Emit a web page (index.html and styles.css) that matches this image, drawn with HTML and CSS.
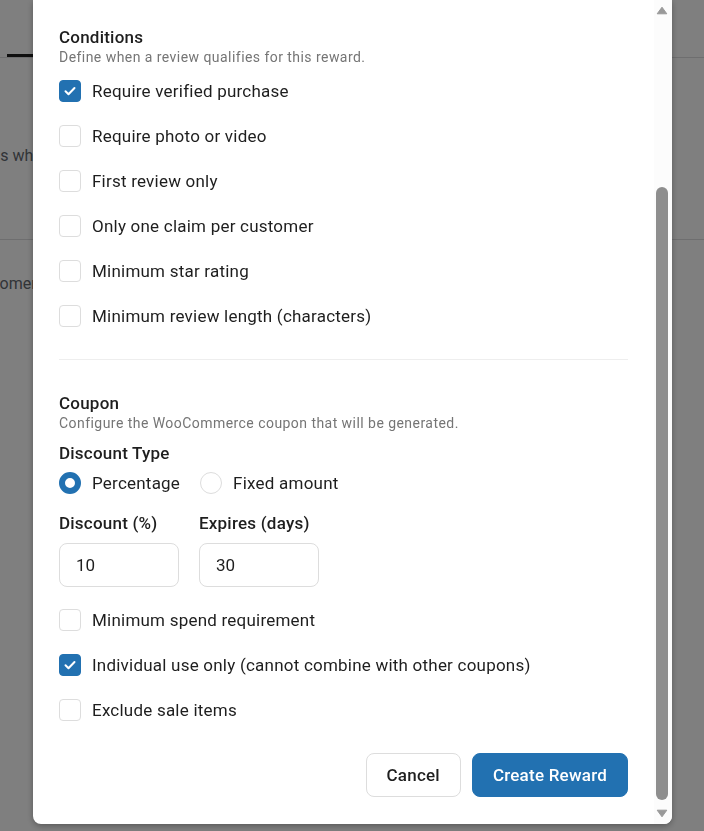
FILE: index.html
```html
<!DOCTYPE html>
<html lang="en">
<head>
  <meta charset="UTF-8">
  <meta name="viewport" content="width=device-width, initial-scale=1.0">
  <title>Review Rewards</title>
  <link rel="stylesheet" href="styles.css">
</head>
<body>
  <!-- Page behind the modal -->
  <div class="page">
    <header class="page-header">
      <nav class="tabs">
        <a class="tab active">Rewards</a>
        <a class="tab">Settings</a>
      </nav>
    </header>
    <section class="page-intro">
      <p class="page-desc">Rewards when a customer leaves a review for a product.</p>
    </section>
    <section class="page-row">
      <p class="page-text">customer reviews</p>
    </section>
  </div>

  <!-- Create Reward modal -->
  <div class="overlay">
    <div class="modal">
      <div class="modal-scroll">
        <div class="modal-body">
          <h2 class="modal-title">Create Reward</h2>

          <div class="field name-field">
            <label class="field-label">Reward name</label>
            <input class="text-input" type="text" value="Review reward">
          </div>

          <section class="group">
            <h3 class="group-title">Conditions</h3>
            <p class="group-desc">Define when a review qualifies for this reward.</p>
            <div class="check-list">
              <label class="check"><span class="box checked"><svg viewBox="0 0 22 22" width="22" height="22"><path d="M6.5 11.3l3 3 6-6.3" fill="none" stroke="#fff" stroke-width="2" stroke-linecap="round" stroke-linejoin="round"/></svg></span>Require verified purchase</label>
              <label class="check"><span class="box"></span>Require photo or video</label>
              <label class="check"><span class="box"></span>First review only</label>
              <label class="check"><span class="box"></span>Only one claim per customer</label>
              <label class="check"><span class="box"></span>Minimum star rating</label>
              <label class="check"><span class="box"></span>Minimum review length (characters)</label>
            </div>
          </section>

          <hr class="divider">

          <section class="group coupon">
            <h3 class="group-title">Coupon</h3>
            <p class="group-desc">Configure the WooCommerce coupon that will be generated.</p>
            <div class="field-title type-title">Discount Type</div>
            <div class="radio-row">
              <label class="radio"><span class="dot checked"></span>Percentage</label>
              <label class="radio"><span class="dot"></span>Fixed amount</label>
            </div>
            <div class="field-grid">
              <div class="field num-field">
                <label class="field-title">Discount (%)</label>
                <input class="num-input" type="text" value="10">
              </div>
              <div class="field num-field">
                <label class="field-title">Expires (days)</label>
                <input class="num-input" type="text" value="30">
              </div>
            </div>
            <div class="check-list coupon-checks">
              <label class="check"><span class="box"></span>Minimum spend requirement</label>
              <label class="check"><span class="box checked"><svg viewBox="0 0 22 22" width="22" height="22"><path d="M6.5 11.3l3 3 6-6.3" fill="none" stroke="#fff" stroke-width="2" stroke-linecap="round" stroke-linejoin="round"/></svg></span>Individual use only (cannot combine with other coupons)</label>
              <label class="check"><span class="box"></span>Exclude sale items</label>
            </div>
          </section>

          <div class="actions">
            <button class="btn">Cancel</button>
            <button class="btn primary">Create Reward</button>
          </div>
        </div>
      </div>

      <!-- scrollbar of the modal body -->
      <div class="scrollbar">
        <div class="sb-btn sb-up"><svg width="12" height="9" viewBox="0 0 12 9"><path d="M6 1.2L10.8 7.8H1.2z" fill="#999" stroke="#999" stroke-linejoin="round"/></svg></div>
        <div class="sb-track"><div class="sb-thumb"></div></div>
        <div class="sb-btn sb-down"><svg width="12" height="9" viewBox="0 0 12 9"><path d="M6 7.8L10.8 1.2H1.2z" fill="#999" stroke="#999" stroke-linejoin="round"/></svg></div>
      </div>
    </div>
  </div>
</body>
</html>
```

FILE: styles.css
```css
body {
  margin: 0;
  font-family: Roboto, "Liberation Sans", Arial, sans-serif;
  background: #fff;
  color: #1e1e1e;
  overflow: hidden;
}

/* Page behind */
.page-header {
  height: 58px;
  border-bottom: 1px solid #dcdcde;
  padding: 0 7px;
  display: flex;
  align-items: flex-end;
  box-sizing: border-box;
}

.tabs {
  display: flex;
}

.tab {
  padding: 0 40px 18px;
  font-size: 14px;
  color: #50575e;
  border-bottom: 3px solid transparent;
}

.tab.active {
  color: #1e1e1e;
  border-bottom-color: #1e1e1e;
}

.page-intro {
  height: 182px;
  padding-top: 88px;
  box-sizing: border-box;
  border-bottom: 1px solid #dcdcde;
}

.page-desc,
.page-text {
  margin: 0;
  font-size: 16px;
  line-height: 20px;
  color: #646970;
  white-space: nowrap;
}

.page-desc {
  margin-left: -53px;
}

.page-row {
  padding-top: 34px;
}

.page-text {
  margin-left: -31px;
}

/* Overlay + modal */
.overlay {
  position: fixed;
  top: 0;
  left: 0;
  right: 0;
  bottom: 0;
  background: rgba(0, 0, 0, 0.5);
  display: flex;
  align-items: flex-end;
  padding: 0 32px 7px 33px;
}

.modal {
  flex: 1;
  height: 824px;
  background: #fff;
  border-radius: 0 0 8px 8px;
  box-shadow: 0 2px 6px rgba(0, 0, 0, 0.3);
  overflow: hidden;
  display: flex;
}

.modal-scroll {
  flex: 1;
  overflow: hidden;
  display: flex;
  flex-direction: column-reverse;
}

.modal-body {
  flex: none;
  padding: 24px 26px 27px;
}

/* Scrollbar */
.scrollbar {
  width: 18px;
  flex: none;
  background: #fcfcfc;
  display: flex;
  flex-direction: column;
}

.sb-btn {
  display: flex;
  align-items: center;
  padding-left: 2px;
}

.sb-up {
  height: 20px;
}

.sb-down {
  height: 22px;
}

.sb-track {
  flex: 1;
  display: flex;
  flex-direction: column;
  justify-content: flex-end;
  padding: 0 4px 2px 2px;
}

.sb-thumb {
  height: 613px;
  background: #8e8e8e;
  border-radius: 6px;
}

/* Hidden top part of the form */
.modal-title {
  margin: 0 0 20px;
  font-size: 20px;
  line-height: 28px;
  font-weight: 500;
}

.field {
  display: flex;
  flex-direction: column;
  gap: 8px;
}

.name-field {
  margin-bottom: 79px;
}

.field-label {
  font-size: 14px;
  line-height: 20px;
  font-weight: 500;
}

.text-input {
  height: 44px;
  box-sizing: border-box;
  border: 1px solid #ddd;
  border-radius: 8px;
  padding: 0 16px;
  font: inherit;
  font-size: 16px;
  color: #1e1e1e;
}

/* Groups */
.group-title {
  margin: 0;
  font-size: 17px;
  line-height: 20px;
  letter-spacing: 0.22px;
  font-weight: 500;
  color: #1e1e1e;
}

.group-desc {
  margin: 1px 0 0;
  font-size: 14px;
  line-height: 18px;
  letter-spacing: 0.45px;
  color: #757575;
}

.check-list {
  margin-top: 14px;
  display: flex;
  flex-direction: column;
  gap: 23px;
}

.check,
.radio {
  display: flex;
  align-items: center;
  gap: 11px;
  height: 22px;
  font-size: 17px;
  letter-spacing: 0.22px;
  color: #1e1e1e;
  white-space: nowrap;
}

.box {
  width: 22px;
  height: 22px;
  box-sizing: border-box;
  border: 1px solid #ddd;
  border-radius: 4px;
  background: #fff;
  flex: none;
  display: flex;
}

.box.checked {
  background: #2271b1;
  border-color: #2271b1;
}

.box svg {
  margin: -1px;
}

.divider {
  border: none;
  border-top: 1px solid #eee;
  margin: 32px 0 33px;
}

.field-title {
  font-size: 17px;
  line-height: 20px;
  letter-spacing: 0.22px;
  font-weight: 500;
  color: #1e1e1e;
}

.type-title {
  margin-top: 11px;
}

.radio-row {
  margin-top: 9px;
  display: flex;
  gap: 20px;
}

.dot {
  width: 22px;
  height: 22px;
  box-sizing: border-box;
  border: 1px solid #ddd;
  border-radius: 50%;
  background: #fff;
  flex: none;
}

.dot.checked {
  border: 6px solid #2271b1;
}

.field-grid {
  margin-top: 19px;
  display: flex;
  gap: 20px;
}

.num-field {
  gap: 10px;
}

.num-input {
  width: 120px;
  height: 44px;
  box-sizing: border-box;
  border: 1px solid #ddd;
  border-radius: 8px;
  padding: 0 16px;
  font: inherit;
  font-size: 17px;
  color: #1e1e1e;
}

.coupon-checks {
  margin-top: 22px;
}

/* Actions */
.actions {
  margin-top: 32px;
  display: flex;
  justify-content: flex-end;
  gap: 11px;
}

.btn {
  height: 44px;
  padding: 0 20px;
  border: 1px solid #ddd;
  border-radius: 8px;
  background: #fff;
  color: #1e1e1e;
  font: inherit;
  font-size: 17px;
  letter-spacing: 0.22px;
  font-weight: 500;
  cursor: pointer;
}

.btn.primary {
  background: #2271b1;
  border-color: #2271b1;
  color: #fff;
}
```
